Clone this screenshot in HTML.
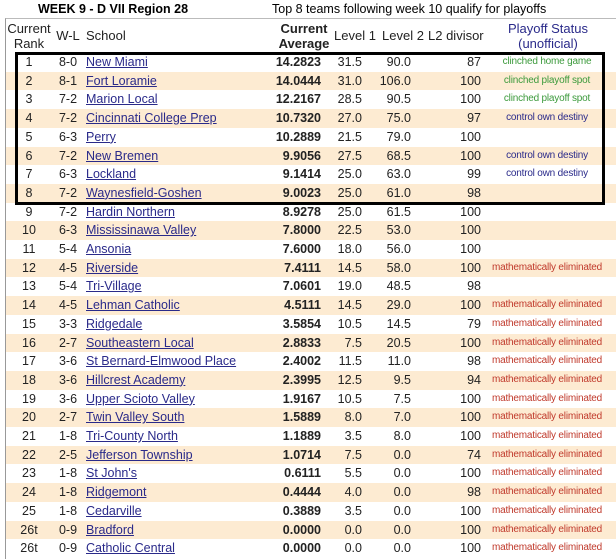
<!DOCTYPE html>
<html><head><meta charset="utf-8"><style>
body{margin:0;width:616px;height:555px;overflow:hidden;background:#fff;font-family:"Liberation Sans",Arial,sans-serif;position:relative}
.t{position:absolute;white-space:nowrap}
.row{position:absolute;left:6px;width:610px;height:18.7px;font-size:12.5px;line-height:18.7px;color:#222}
.row.b{background:#fdebd2}
.row span{position:absolute;top:0}
.rk{left:0;width:46px;text-align:center}
.wl{left:46px;width:32px;text-align:center}
.sc{left:80px;color:#2a2a8a;text-decoration:underline}
.av{right:295px;font-weight:bold}
.l1{right:254px}
.l2{right:205px}
.dv{right:135px}
.st{left:477px;width:128px;text-align:center;font-size:10px;letter-spacing:-0.2px}
.g{color:#3c9a3c}.c{color:#2a2a8a}.e{color:#c0392b}
.h{position:absolute;font-size:13px;color:#222;line-height:15px;text-align:center}
</style></head><body>
<div class="t" style="left:38px;top:2px;font-size:12.5px;font-weight:bold">WEEK 9 - D VII Region 28</div>
<div class="t" style="left:272px;top:2px;font-size:12.5px">Top 8 teams following week 10 qualify for playoffs</div>
<div style="position:absolute;left:5px;top:18px;width:611px;height:540px;border-left:1px solid #999;border-top:1px solid #bbb"></div>
<div class="h" style="left:6px;top:21px;width:46px">Current<br>Rank</div>
<div class="h" style="left:52px;top:28px;width:32px">W-L</div>
<div class="h" style="left:86px;top:28px">School</div>
<div class="h" style="left:276px;top:21px;width:56px;font-weight:bold">Current<br>Average</div>
<div class="h" style="left:334px;top:28px">Level 1</div>
<div class="h" style="left:382px;top:28px">Level 2</div>
<div class="h" style="left:428px;top:28px">L2 divisor</div>
<div class="h" style="left:483px;top:21px;width:130px;color:#2a2a8a">Playoff Status<br>(unofficial)</div>
<div class="row" style="top:53.0px"><span class="rk">1</span><span class="wl">8-0</span><span class="sc">New Miami</span><span class="av">14.2823</span><span class="l1">31.5</span><span class="l2">90.0</span><span class="dv">87</span><span class="st g">clinched home game</span></div>
<div class="row b" style="top:71.7px"><span class="rk">2</span><span class="wl">8-1</span><span class="sc">Fort Loramie</span><span class="av">14.0444</span><span class="l1">31.0</span><span class="l2">106.0</span><span class="dv">100</span><span class="st g">clinched playoff spot</span></div>
<div class="row" style="top:90.4px"><span class="rk">3</span><span class="wl">7-2</span><span class="sc">Marion Local</span><span class="av">12.2167</span><span class="l1">28.5</span><span class="l2">90.5</span><span class="dv">100</span><span class="st g">clinched playoff spot</span></div>
<div class="row b" style="top:109.1px"><span class="rk">4</span><span class="wl">7-2</span><span class="sc">Cincinnati College Prep</span><span class="av">10.7320</span><span class="l1">27.0</span><span class="l2">75.0</span><span class="dv">97</span><span class="st c">control own destiny</span></div>
<div class="row" style="top:127.8px"><span class="rk">5</span><span class="wl">6-3</span><span class="sc">Perry</span><span class="av">10.2889</span><span class="l1">21.5</span><span class="l2">79.0</span><span class="dv">100</span></div>
<div class="row b" style="top:146.5px"><span class="rk">6</span><span class="wl">7-2</span><span class="sc">New Bremen</span><span class="av">9.9056</span><span class="l1">27.5</span><span class="l2">68.5</span><span class="dv">100</span><span class="st c">control own destiny</span></div>
<div class="row" style="top:165.2px"><span class="rk">7</span><span class="wl">6-3</span><span class="sc">Lockland</span><span class="av">9.1414</span><span class="l1">25.0</span><span class="l2">63.0</span><span class="dv">99</span><span class="st c">control own destiny</span></div>
<div class="row b" style="top:183.9px"><span class="rk">8</span><span class="wl">7-2</span><span class="sc">Waynesfield-Goshen</span><span class="av">9.0023</span><span class="l1">25.0</span><span class="l2">61.0</span><span class="dv">98</span></div>
<div class="row" style="top:202.6px"><span class="rk">9</span><span class="wl">7-2</span><span class="sc">Hardin Northern</span><span class="av">8.9278</span><span class="l1">25.0</span><span class="l2">61.5</span><span class="dv">100</span></div>
<div class="row b" style="top:221.3px"><span class="rk">10</span><span class="wl">6-3</span><span class="sc">Mississinawa Valley</span><span class="av">7.8000</span><span class="l1">22.5</span><span class="l2">53.0</span><span class="dv">100</span></div>
<div class="row" style="top:240.0px"><span class="rk">11</span><span class="wl">5-4</span><span class="sc">Ansonia</span><span class="av">7.6000</span><span class="l1">18.0</span><span class="l2">56.0</span><span class="dv">100</span></div>
<div class="row b" style="top:258.7px"><span class="rk">12</span><span class="wl">4-5</span><span class="sc">Riverside</span><span class="av">7.4111</span><span class="l1">14.5</span><span class="l2">58.0</span><span class="dv">100</span><span class="st e">mathematically eliminated</span></div>
<div class="row" style="top:277.4px"><span class="rk">13</span><span class="wl">5-4</span><span class="sc">Tri-Village</span><span class="av">7.0601</span><span class="l1">19.0</span><span class="l2">48.5</span><span class="dv">98</span></div>
<div class="row b" style="top:296.1px"><span class="rk">14</span><span class="wl">4-5</span><span class="sc">Lehman Catholic</span><span class="av">4.5111</span><span class="l1">14.5</span><span class="l2">29.0</span><span class="dv">100</span><span class="st e">mathematically eliminated</span></div>
<div class="row" style="top:314.8px"><span class="rk">15</span><span class="wl">3-3</span><span class="sc">Ridgedale</span><span class="av">3.5854</span><span class="l1">10.5</span><span class="l2">14.5</span><span class="dv">79</span><span class="st e">mathematically eliminated</span></div>
<div class="row b" style="top:333.5px"><span class="rk">16</span><span class="wl">2-7</span><span class="sc">Southeastern Local</span><span class="av">2.8833</span><span class="l1">7.5</span><span class="l2">20.5</span><span class="dv">100</span><span class="st e">mathematically eliminated</span></div>
<div class="row" style="top:352.2px"><span class="rk">17</span><span class="wl">3-6</span><span class="sc">St Bernard-Elmwood Place</span><span class="av">2.4002</span><span class="l1">11.5</span><span class="l2">11.0</span><span class="dv">98</span><span class="st e">mathematically eliminated</span></div>
<div class="row b" style="top:370.9px"><span class="rk">18</span><span class="wl">3-6</span><span class="sc">Hillcrest Academy</span><span class="av">2.3995</span><span class="l1">12.5</span><span class="l2">9.5</span><span class="dv">94</span><span class="st e">mathematically eliminated</span></div>
<div class="row" style="top:389.6px"><span class="rk">19</span><span class="wl">3-6</span><span class="sc">Upper Scioto Valley</span><span class="av">1.9167</span><span class="l1">10.5</span><span class="l2">7.5</span><span class="dv">100</span><span class="st e">mathematically eliminated</span></div>
<div class="row b" style="top:408.3px"><span class="rk">20</span><span class="wl">2-7</span><span class="sc">Twin Valley South</span><span class="av">1.5889</span><span class="l1">8.0</span><span class="l2">7.0</span><span class="dv">100</span><span class="st e">mathematically eliminated</span></div>
<div class="row" style="top:427.0px"><span class="rk">21</span><span class="wl">1-8</span><span class="sc">Tri-County North</span><span class="av">1.1889</span><span class="l1">3.5</span><span class="l2">8.0</span><span class="dv">100</span><span class="st e">mathematically eliminated</span></div>
<div class="row b" style="top:445.7px"><span class="rk">22</span><span class="wl">2-5</span><span class="sc">Jefferson Township</span><span class="av">1.0714</span><span class="l1">7.5</span><span class="l2">0.0</span><span class="dv">74</span><span class="st e">mathematically eliminated</span></div>
<div class="row" style="top:464.4px"><span class="rk">23</span><span class="wl">1-8</span><span class="sc">St John's</span><span class="av">0.6111</span><span class="l1">5.5</span><span class="l2">0.0</span><span class="dv">100</span><span class="st e">mathematically eliminated</span></div>
<div class="row b" style="top:483.1px"><span class="rk">24</span><span class="wl">1-8</span><span class="sc">Ridgemont</span><span class="av">0.4444</span><span class="l1">4.0</span><span class="l2">0.0</span><span class="dv">98</span><span class="st e">mathematically eliminated</span></div>
<div class="row" style="top:501.8px"><span class="rk">25</span><span class="wl">1-8</span><span class="sc">Cedarville</span><span class="av">0.3889</span><span class="l1">3.5</span><span class="l2">0.0</span><span class="dv">100</span><span class="st e">mathematically eliminated</span></div>
<div class="row b" style="top:520.5px"><span class="rk">26t</span><span class="wl">0-9</span><span class="sc">Bradford</span><span class="av">0.0000</span><span class="l1">0.0</span><span class="l2">0.0</span><span class="dv">100</span><span class="st e">mathematically eliminated</span></div>
<div class="row" style="top:539.2px"><span class="rk">26t</span><span class="wl">0-9</span><span class="sc">Catholic Central</span><span class="av">0.0000</span><span class="l1">0.0</span><span class="l2">0.0</span><span class="dv">100</span><span class="st e">mathematically eliminated</span></div>
<div style="position:absolute;left:15px;top:52px;width:584px;height:147px;border:3px solid #000"></div>
</body></html>
